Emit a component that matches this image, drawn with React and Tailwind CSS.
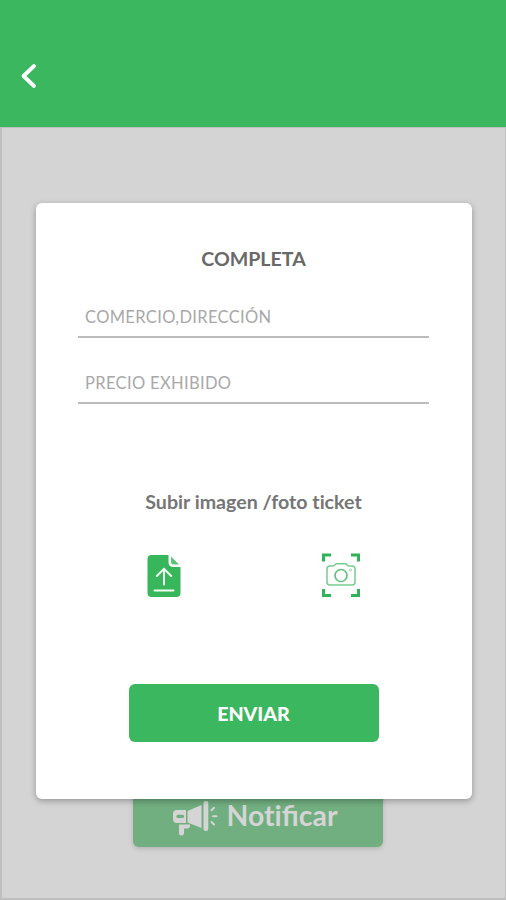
import React, { useState } from "react";

const BackIcon = () => (
  <svg width="17" height="26" viewBox="0 0 17 26" fill="none">
    <path
      d="M14 3L3.500 13L14 23"
      stroke="#fff"
      strokeWidth="3.800"
      strokeLinecap="round"
      strokeLinejoin="round"
    />
  </svg>
);

const UploadFileIcon = () => (
  <svg width="34" height="44" viewBox="0 0 34 44" fill="none">
    <path
      d="M4.500 1H21.500V8.500a4.500 4.500 0 0 0 4.500 4.500H33.500V39a4 4 0 0 1-4 4H4.500a4 4 0 0 1-4-4V5a4 4 0 0 1 4-4Z"
      fill="#37b65c"
    />
    <path d="M24 2.500L32 10.600H26.500A2.500 2.500 0 0 1 24 8.100Z" fill="#5dc47a" />
    <path
      d="M17 30.500V15.500M9.800 22L17 14.800L24.200 22M7.500 36.500H26.500"
      stroke="#f1fff3"
      strokeWidth="2"
      strokeLinecap="round"
    />
  </svg>
);

const CameraIcon = () => (
  <svg width="38" height="46" viewBox="0 0 38 46" fill="none">
    <path
      d="M1.500 8.500V2H9M29 2H36.500V8.500M36.500 36V42.500H29M9 42.500H1.500V36"
      stroke="#2fb457"
      strokeWidth="3"
    />
    <path
      d="M8 13H10.500C13 13 12.500 10.800 15 10.800H23C25.500 10.800 25 13 27.500 13H30A3 3 0 0 1 33 16V29A3 3 0 0 1 30 32H8A3 3 0 0 1 5 29V16A3 3 0 0 1 8 13Z"
      stroke="#77cb90"
      strokeWidth="1.500"
    />
    <circle cx="19" cy="22.500" r="6" stroke="#62c17e" strokeWidth="1.700" />
    <circle cx="28.500" cy="17" r="1.100" stroke="#8ed3a2" strokeWidth="0.900" />
  </svg>
);

const MegaphoneIcon = () => (
  <svg width="46" height="36" viewBox="0 0 46 36" fill="none">
    <path
      fillRule="evenodd"
      d="M5 10H14V23H5A4 4 0 0 1 1 19V14A4 4 0 0 1 5 10ZM6 14.800A1 1 0 0 0 6 18H10.500A1 1 0 0 0 10.500 14.800Z"
      fill="#d5d5d5"
    />
    <path d="M15.500 11L29.500 5V28L15.500 22.500Z" fill="#d5d5d5" />
    <rect x="31.500" y="1" width="4.800" height="30" rx="2" fill="#d5d5d5" />
    <path
      d="M7 24.500H18V25.500A3 3 0 0 1 15 28.500H12V33A2.500 2.500 0 0 1 7 33Z"
      fill="#d5d5d5"
    />
    <path
      d="M39.500 10.300L42 7.700M41 16.200H44.500M39.500 22L42 24.500"
      stroke="#d5d5d5"
      strokeWidth="2"
      strokeLinecap="round"
    />
  </svg>
);

const Field = ({ label, value, onChange }) => {
  return (
    <input
      type="text"
      value={value}
      onChange={onChange}
      placeholder={label}
      aria-label={label}
      className="block w-full h-[42px] px-[7px] pt-[2px] border-b-2 border-[#bcbcbc] bg-transparent text-[16.5px] tracking-[0.35px] text-[#696969] placeholder:text-[#a8a8a8] outline-none"
    />
  );
};

const App = () => {
  const [comercio, setcomercio] = useState("");
  const [precio, setprecio] = useState("");

  return (
    <div className="h-[900px] w-[506px] flex flex-col overflow-hidden bg-[#d4d4d4] font-['Lato',sans-serif]">
      <header className="h-[127px] shrink-0 bg-[#3bb75f] pt-[63px] pl-[20px]">
        <button aria-label="Volver" className="block">
          <BackIcon />
        </button>
      </header>

      <main className="flex-1 flex flex-col items-center border-t border-r border-b-2 border-l-2 border-[#bfbfbf] pt-[75px]">
        <form
          onSubmit={(e) => e.preventDefault()}
          className="relative z-10 w-[436px] h-[596px] shrink-0 flex flex-col items-center rounded-md bg-white shadow-[0_2px_6px_rgba(0,0,0,0.3)]"
        >
          <h1 className="mt-[42px] h-[28px] leading-[28px] text-[19.6px] font-bold text-[#696969]">
            COMPLETA
          </h1>

          <div className="mt-[23px] w-[351px] flex flex-col gap-[24px]">
            <Field
              label="COMERCIO,DIRECCIÓN"
              value={comercio}
              onChange={(e) => setcomercio(e.target.value)}
            />
            <Field
              label="PRECIO EXHIBIDO"
              value={precio}
              onChange={(e) => setprecio(e.target.value)}
            />
          </div>

          <p className="mt-[84px] h-[28px] leading-[28px] text-[19.6px] [font-variant-ligatures:none] font-bold text-[#757575]">
            Subir imagen /foto ticket
          </p>

          <div className="mt-[37px] w-[213px] flex items-center justify-between">
            <button type="button" aria-label="Subir imagen">
              <UploadFileIcon />
            </button>
            <button type="button" aria-label="Foto ticket">
              <CameraIcon />
            </button>
          </div>

          <button
            type="submit"
            className="mt-[85px] w-[250px] h-[58px] rounded-md bg-[#3bb75f] pt-[1px] text-[19.6px] font-black text-white"
          >
            ENVIAR
          </button>
        </form>

        <button className="-mt-[10px] ml-[9px] w-[250px] h-[58px] shrink-0 flex items-center justify-center gap-[9px] rounded-md bg-[#71ae80] pr-[7px] text-[28.4px] font-bold text-[#d5d5d5] shadow-[0_2px_5px_rgba(0,0,0,0.15)]">
          <MegaphoneIcon />
          <span className="pb-[5px]">{"Not\u200cificar"}</span>
        </button>
      </main>
    </div>
  );
};

export default App;
